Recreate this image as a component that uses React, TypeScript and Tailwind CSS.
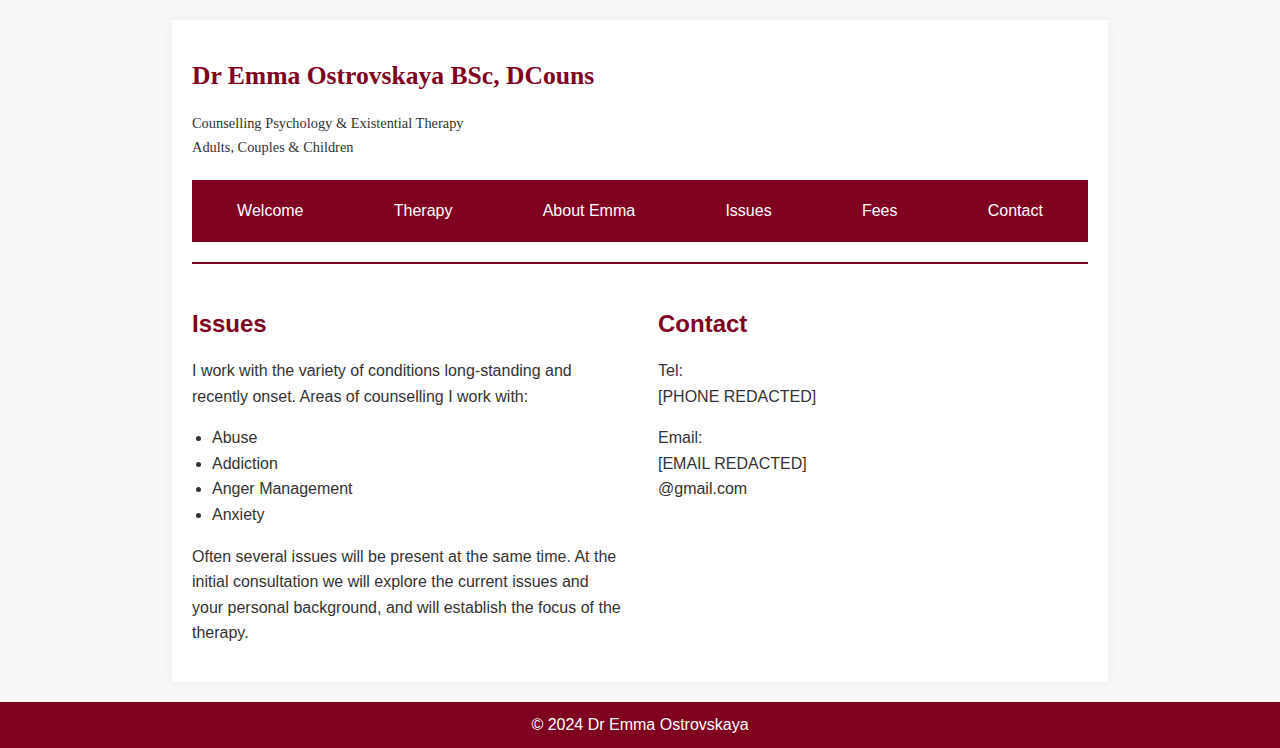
const navItems = ['Welcome', 'Therapy', 'About Emma', 'Issues', 'Fees', 'Contact']

const issues = ['Abuse', 'Addiction', 'Anger Management', 'Anxiety']

const App = () => {
  return (
    <div className="min-h-screen flex flex-col bg-[#f8f8f8] text-[#333] font-['Liberation_Sans',Arial,sans-serif]">
      <div className="w-[936px] mx-auto mt-5 mb-5 bg-white p-5 shadow-[0_0_10px_rgba(0,0,0,0.06)]">
        <header>
          <h1 className="mt-[21px] text-[25.6px] leading-[30px] font-bold text-[#800020] font-['Liberation_Serif','Times_New_Roman',serif]">
            Dr Emma Ostrovskaya BSc, DCouns
          </h1>
          <div className="mt-5 text-[14.4px] leading-[24px] font-['Liberation_Serif','Times_New_Roman',serif]">
            <p>Counselling Psychology &amp; Existential Therapy</p>
            <p>Adults, Couples &amp; Children</p>
          </div>
        </header>

        <nav className="mt-[21px] h-[62px] bg-[#800020] flex items-center justify-around">
          {navItems.map((item) => (
            <a key={item} href="#" className="text-white text-base">
              {item}
            </a>
          ))}
        </nav>

        <div className="mt-5 border-t-2 border-[#800020]"></div>

        <main className="mt-[46px] grid grid-cols-2 gap-[36px] text-base leading-[1.6]">
          <section>
            <h2 className="text-2xl leading-[28px] font-bold text-[#800020] mb-5">Issues</h2>
            <p className="mb-4">
              I work with the variety of conditions long-standing and recently onset. Areas of counselling I work with:
            </p>
            <ul className="list-disc pl-5 mb-4">
              {issues.map((item) => (
                <li key={item}>{item}</li>
              ))}
            </ul>
            <p className="mb-4">
              Often several issues will be present at the same time. At the initial consultation we will explore the current issues and your personal background, and will establish the focus of the therapy.
            </p>
          </section>
          <section>
            <h2 className="text-2xl leading-[28px] font-bold text-[#800020] mb-5">Contact</h2>
            <p className="mb-4">
              Tel:<br />[PHONE REDACTED]
            </p>
            <p className="mb-4">
              Email:<br />[EMAIL REDACTED]<br />@gmail.com
            </p>
          </section>
        </main>
      </div>

      <footer className="mt-auto h-[46px] bg-[#800020] text-white flex items-center justify-center text-base">
        © 2024 Dr Emma Ostrovskaya
      </footer>
    </div>
  )
}

export default App
